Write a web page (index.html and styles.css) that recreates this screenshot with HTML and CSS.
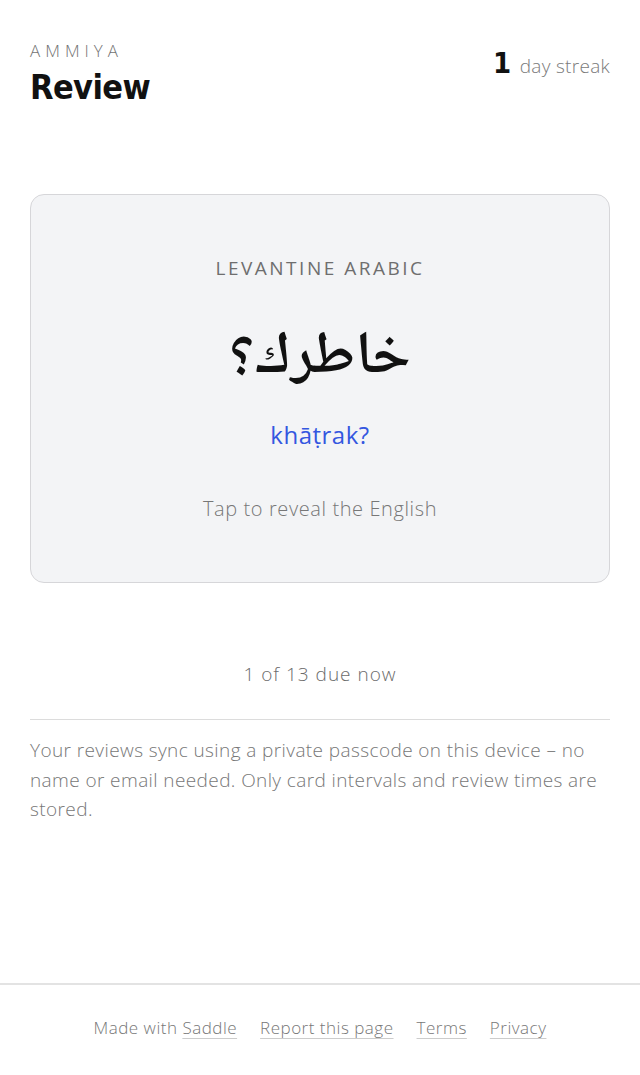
FILE: index.html
```html
<!DOCTYPE html>
<html lang="en">
<head>
  <meta charset="UTF-8" />
  <title>Ammiya Review</title>
  <link rel="stylesheet" href="styles.css">
</head>
<body>
  <div class="page">
    <header class="top">
      <div>
        <div class="brand">AMMIYA</div>
        <h1>Review</h1>
      </div>
      <div class="streak"><b>1</b> day streak</div>
    </header>

    <div class="card">
      <div class="card-label">LEVANTINE ARABIC</div>
      <div class="arabic" lang="ar" dir="rtl">خاطرك؟</div>
      <div class="translit">khāṭrak?</div>
      <div class="hint">Tap to reveal the English</div>
    </div>

    <div class="due">1 of 13 due now</div>

    <p class="note">Your reviews sync using a private passcode on this device – no name or email needed. Only card intervals and review times are stored.</p>
  </div>

  <footer class="foot">
    <span>Made with <a href="#">Saddle</a></span>
    <a href="#">Report this page</a>
    <a href="#">Terms</a>
    <a href="#">Privacy</a>
  </footer>
</body>
</html>
```

FILE: styles.css
```css
body {
  margin: 0;
  font-family: "Open Sans", Lato, sans-serif;
  background: #fff;
  color: #111;
}

.page {
  padding: 40px 30px 0;
  min-height: 983px;
  box-sizing: border-box;
}

.top {
  display: flex;
  justify-content: space-between;
  align-items: flex-start;
}

.brand {
  font-size: 17px;
  line-height: 22px;
  letter-spacing: 5px;
  color: #737373;
  font-weight: 300;
}

h1 {
  margin: 5px 0 0;
  font-family: "DejaVu Sans Condensed", "Liberation Sans Narrow", sans-serif;
  font-weight: bold;
  font-size: 34px;
  line-height: 40px;
  letter-spacing: -0.6px;
  color: #111;
}

.streak {
  font-size: 19px;
  line-height: 36px;
  letter-spacing: 0.3px;
  color: #7a7a7a;
  font-weight: 300;
  margin-top: 5px;
}

.streak b {
  font-family: "DejaVu Sans Condensed", "Liberation Sans Narrow", sans-serif;
  font-weight: bold;
  font-size: 29px;
  color: #111;
  margin-right: 3px;
}

.card {
  margin-top: 87px;
  background: #f3f4f6;
  border: 1.5px solid #d6d6d9;
  border-radius: 14px;
  height: 389px;
  box-sizing: border-box;
  text-align: center;
  padding-top: 60px;
}

.card-label {
  font-size: 19px;
  line-height: 26px;
  letter-spacing: 2.5px;
  color: #6e6e6e;
  font-weight: 400;
}

.arabic {
  font-family: "Noto Naskh Arabic", "Noto Sans Arabic", "DejaVu Sans", sans-serif;
  font-weight: 600;
  font-size: 60px;
  line-height: 90px;
  margin-top: 33px;
  margin-bottom: -3px;
  color: #111;
}

.translit {
  margin-top: 18px;
  font-size: 24px;
  line-height: 32px;
  letter-spacing: 0.5px;
  color: #3457e0;
}

.hint {
  margin-top: 44px;
  font-size: 20px;
  line-height: 28px;
  letter-spacing: 0.6px;
  color: #777;
  font-weight: 300;
}

.due {
  margin-top: 77px;
  text-align: center;
  font-size: 19px;
  line-height: 28px;
  letter-spacing: 1px;
  color: #6b6b6b;
  font-weight: 300;
  padding-bottom: 31px;
  border-bottom: 1.5px solid #dcdcdc;
}

.note {
  margin: 16px 0 0;
  font-size: 19px;
  line-height: 29.5px;
  letter-spacing: 0.4px;
  color: #777;
  font-weight: 300;
}

.foot {
  border-top: 2px solid #e3e3e3;
  display: flex;
  justify-content: center;
  gap: 23px;
  padding-top: 31px;
  height: 92px;
  box-sizing: border-box;
  font-size: 17px;
  line-height: 24px;
  letter-spacing: 0.5px;
  color: #777;
  font-weight: 300;
}

.foot a {
  color: #777;
  text-decoration: underline;
  text-decoration-color: #ccc;
  text-underline-offset: 4px;
}
```
